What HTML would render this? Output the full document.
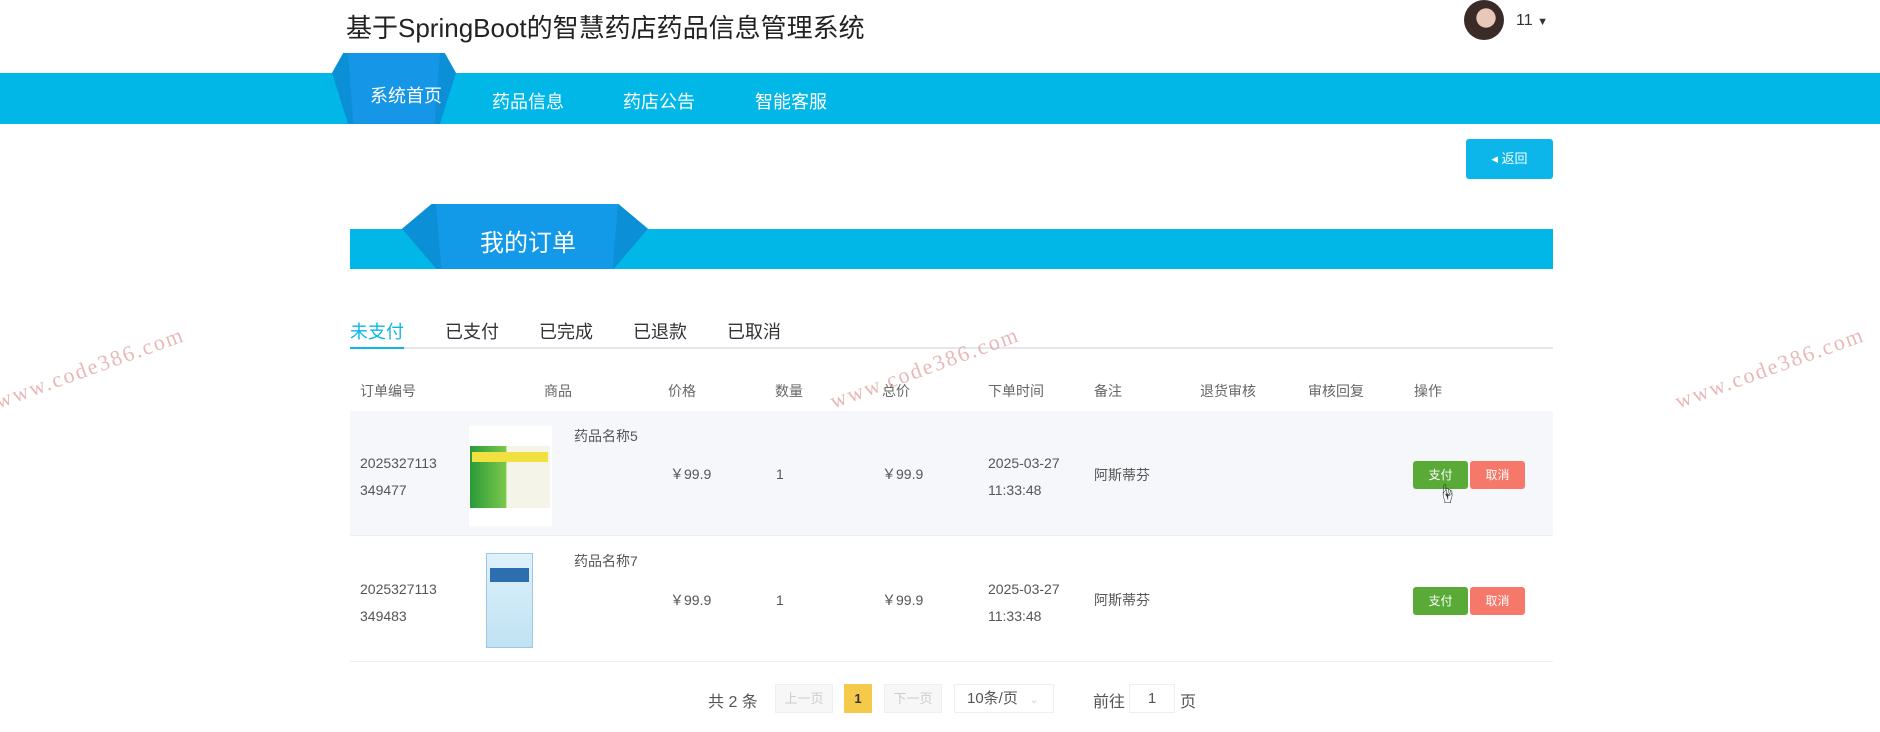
<!DOCTYPE html>
<html><head><meta charset="utf-8"><style>
*{margin:0;padding:0;box-sizing:border-box}
body{width:1880px;height:732px;background:#fff;font-family:"Liberation Sans","Noto Sans CJK SC",sans-serif;color:#333;position:relative;overflow:hidden}
.a{position:absolute;white-space:nowrap}
.wm{position:absolute;color:#d98a8a;opacity:.6;font-family:"Liberation Serif",serif;font-size:22px;transform:rotate(-20deg);letter-spacing:2px}
.th{position:absolute;top:381px;font-size:14px;color:#666}
.td{position:absolute;font-size:14px;color:#555;line-height:27px}
.btn{position:absolute;height:28px;width:55px;color:#fff;font-size:12px;text-align:center;line-height:28px;border-radius:3px}
.pb{position:absolute;top:684px;height:29px;border:1px solid #eee;font-size:13px;color:#ccc;text-align:center;line-height:27px;background:#f7f7f7}
</style></head><body>
<div class="a" style="left:346px;top:8px;font-size:26px;color:#222">基于SpringBoot的智慧药店药品信息管理系统</div>
<div class="a" style="left:1464px;top:0;width:40px;height:40px;border-radius:50%;background:radial-gradient(circle at 55% 45%,#e8c8b8 0 30%,#3a2a28 32%)"></div>
<div class="a" style="left:1516px;top:12px;font-size:16px;color:#333">11 <span style="font-size:11px">▼</span></div>
<div class="a" style="left:0;top:73px;width:1880px;height:51px;background:#00b7e8"></div>
<div class="a" style="left:332px;top:53px;width:124px;height:71px;background:#0b8fd6;clip-path:polygon(0 28%,9% 0,91% 0,100% 28%,87% 100%,13% 100%)"></div>
<div class="a" style="left:348px;top:53px;width:92px;height:71px;background:#1596e6;clip-path:polygon(0 0,100% 0,94% 100%,6% 100%)"></div>
<div class="a" style="left:370px;top:82px;font-size:18px;color:#fff">系统首页</div>
<div class="a" style="left:492px;top:88px;font-size:18px;color:#fff">药品信息</div>
<div class="a" style="left:623px;top:88px;font-size:18px;color:#fff">药店公告</div>
<div class="a" style="left:755px;top:88px;font-size:18px;color:#fff">智能客服</div>
<div class="a" style="left:1466px;top:139px;width:87px;height:40px;background:#0db6ea;border-radius:3px;color:#fff;font-size:13px;text-align:center;line-height:40px">◂ 返回</div>
<div class="a" style="left:350px;top:229px;width:1203px;height:40px;background:#00b7e8"></div>
<div class="a" style="left:402px;top:204px;width:246px;height:65px;background:#0b8fd6;clip-path:polygon(0 38%,12% 0,88% 0,100% 38%,86% 100%,14% 100%)"></div>
<div class="a" style="left:436px;top:204px;width:182px;height:65px;background:#1299e8;clip-path:polygon(0 0,100% 0,97% 100%,3% 100%)"></div>
<div class="a" style="left:480px;top:223px;font-size:24px;color:#fff">我的订单</div>
<div class="a" style="left:350px;top:318px;font-size:18px;color:#0db6ea">未支付</div>
<div class="a" style="left:445px;top:318px;font-size:18px">已支付</div>
<div class="a" style="left:539px;top:318px;font-size:18px">已完成</div>
<div class="a" style="left:633px;top:318px;font-size:18px">已退款</div>
<div class="a" style="left:727px;top:318px;font-size:18px">已取消</div>
<div class="a" style="left:350px;top:347px;width:1203px;height:2px;background:#e4e7ed"></div>
<div class="a" style="left:350px;top:347px;width:54px;height:2px;background:#0db6ea"></div>
<div class="th" style="left:360px">订单编号</div><div class="th" style="left:544px">商品</div><div class="th" style="left:668px">价格</div><div class="th" style="left:775px">数量</div><div class="th" style="left:882px">总价</div><div class="th" style="left:988px">下单时间</div><div class="th" style="left:1094px">备注</div><div class="th" style="left:1200px">退货审核</div><div class="th" style="left:1308px">审核回复</div><div class="th" style="left:1414px">操作</div>
<div class="a" style="left:350px;top:411px;width:1203px;height:125px;background:#f5f7fa;border-bottom:1px solid #ebeef5"></div>
<div class="a" style="left:350px;top:661px;width:1203px;height:1px;background:#ebeef5"></div>
<div class="a" style="left:469px;top:426px;width:83px;height:100px;background:#fff"></div>
<div class="a" style="left:470px;top:446px;width:80px;height:62px;background:linear-gradient(90deg,#2a9a3a,#7bc84a 45%,#f4f4e8 46%);"></div>
<div class="a" style="left:472px;top:452px;width:76px;height:10px;background:#f0e040"></div>
<div class="td" style="left:360px;top:450px">2025327113<br>349477</div>
<div class="td" style="left:574px;top:423px">药品名称5</div>
<div class="td" style="left:670px;top:461px">￥99.9</div>
<div class="td" style="left:776px;top:461px">1</div>
<div class="td" style="left:882px;top:461px">￥99.9</div>
<div class="td" style="left:988px;top:450px">2025-03-27<br>11:33:48</div>
<div class="td" style="left:1094px;top:462px">阿斯蒂芬</div>
<div class="btn" style="left:1413px;top:461px;background:#5aaa38">支付</div>
<div class="btn" style="left:1470px;top:461px;background:#f6786a">取消</div>
<div class="a" style="left:1437px;top:478px;font-size:20px">☝</div>
<div class="a" style="left:486px;top:553px;width:47px;height:95px;background:linear-gradient(#dff1fb,#bfe2f3);border:1px solid #9cc9e0"></div>
<div class="a" style="left:490px;top:568px;width:39px;height:14px;background:#2b6fb0"></div>
<div class="td" style="left:360px;top:576px">2025327113<br>349483</div>
<div class="td" style="left:574px;top:548px">药品名称7</div>
<div class="td" style="left:670px;top:587px">￥99.9</div>
<div class="td" style="left:776px;top:587px">1</div>
<div class="td" style="left:882px;top:587px">￥99.9</div>
<div class="td" style="left:988px;top:576px">2025-03-27<br>11:33:48</div>
<div class="td" style="left:1094px;top:587px">阿斯蒂芬</div>
<div class="btn" style="left:1413px;top:587px;background:#5aaa38">支付</div>
<div class="btn" style="left:1470px;top:587px;background:#f6786a">取消</div>
<div class="a" style="left:708px;top:688px;font-size:16px;color:#555">共 2 条</div>
<div class="pb" style="left:775px;width:58px">上一页</div>
<div class="pb" style="left:844px;width:28px;background:#f5c94a;color:#333;border-color:#f5c94a;font-weight:bold">1</div>
<div class="pb" style="left:884px;width:58px">下一页</div>
<div class="pb" style="left:954px;width:100px;background:#fff;color:#555;font-size:15px;text-align:left;padding-left:12px">10条/页 <span style="color:#ccc;font-size:10px;margin-left:8px">⌄</span></div>
<div class="a" style="left:1093px;top:688px;font-size:16px;color:#555">前往</div>
<div class="pb" style="left:1129px;width:46px;background:#fff;color:#555;font-size:15px">1</div>
<div class="a" style="left:1180px;top:688px;font-size:16px;color:#555">页</div>
<div class="wm" style="left:-10px;top:355px">www.code386.com</div>
<div class="wm" style="left:825px;top:355px">www.code386.com</div>
<div class="wm" style="left:1670px;top:355px">www.code386.com</div>
</body></html>
